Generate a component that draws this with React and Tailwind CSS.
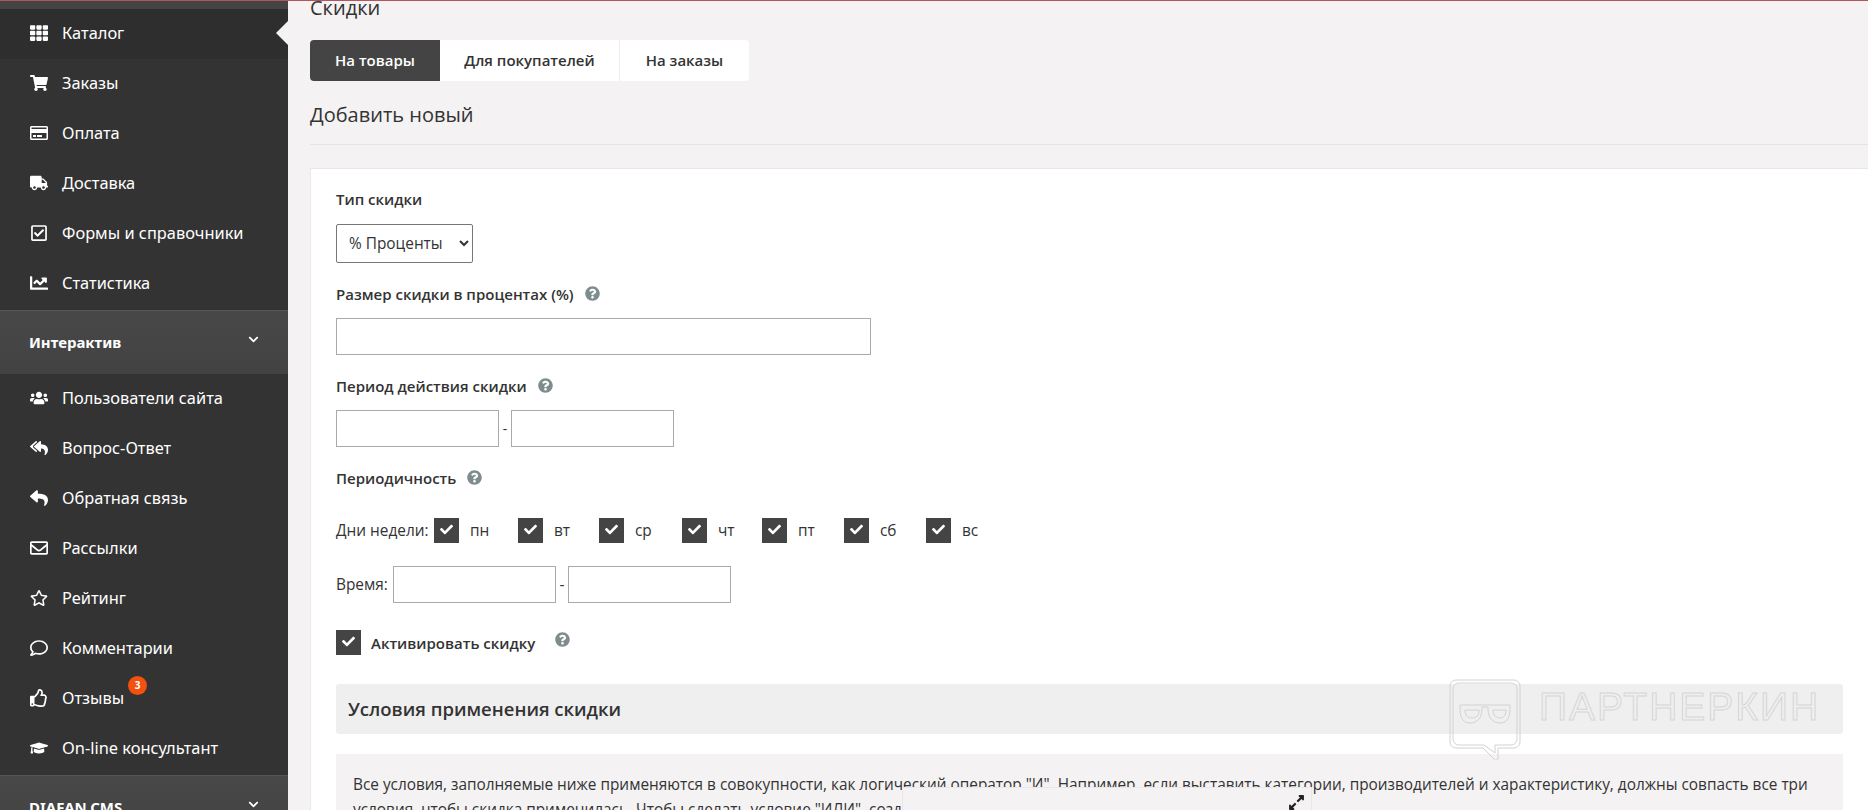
import {
  FaTh, FaShoppingCart, FaRegCreditCard, FaTruck, FaRegCheckSquare, FaChartLine,
  FaUsers, FaReplyAll, FaReply, FaRegEnvelope, FaRegStar, FaRegComment, FaRegThumbsUp,
  FaGraduationCap, FaQuestionCircle, FaCheck, FaExpandAlt, FaChevronDown,
} from "react-icons/fa";

const shopItems = [
  { label: "Каталог", icon: FaTh, active: true },
  { label: "Заказы", icon: FaShoppingCart },
  { label: "Оплата", icon: FaRegCreditCard },
  { label: "Доставка", icon: FaTruck },
  { label: "Формы и справочники", icon: FaRegCheckSquare },
  { label: "Статистика", icon: FaChartLine },
];

const interactiveItems = [
  { label: "Пользователи сайта", icon: FaUsers },
  { label: "Вопрос-Ответ", icon: FaReplyAll },
  { label: "Обратная связь", icon: FaReply },
  { label: "Рассылки", icon: FaRegEnvelope },
  { label: "Рейтинг", icon: FaRegStar },
  { label: "Комментарии", icon: FaRegComment },
  { label: "Отзывы", icon: FaRegThumbsUp, badge: 3 },
  { label: "On-line консультант", icon: FaGraduationCap },
];

const days = [
  { label: "пн", width: "w-[84px]" },
  { label: "вт", width: "w-[81px]" },
  { label: "ср", width: "w-[83px]" },
  { label: "чт", width: "w-[80px]" },
  { label: "пт", width: "w-[82px]" },
  { label: "сб", width: "w-[82px]" },
  { label: "вс", width: "w-[60px]" },
];

function MenuItem({ item }) {
  const Icon = item.icon;
  return (
    <div className={`relative flex h-[50px] items-center pb-[2px] pl-[30px] text-[16.4px] text-white ${item.active ? "bg-[#2e2e2e]" : ""}`}>
      <span className="flex w-[32px] shrink-0 items-center">
        <Icon className="text-[18px]" />
      </span>
      <span>{item.label}</span>
      {item.badge && (
        <span className="absolute left-[128px] top-[2px] flex h-[19px] w-[19px] items-center justify-center rounded-full bg-[#f4500f] text-[10px] font-bold">
          {item.badge}
        </span>
      )}
      {item.active && (
        <span className="absolute right-0 top-[12px] h-0 w-0 border-y-[12px] border-r-[12px] border-y-transparent border-r-[#f4f2f3]" />
      )}
    </div>
  );
}

function MenuHeader({ title, className }) {
  return (
    <div className={`flex h-[64px] items-center justify-between border-t border-[#555] bg-gradient-to-b from-[#484848] to-[#424242] pl-[29px] pr-[29px] text-[15px] font-bold text-white ${className}`}>
      <span>{title}</span>
      <FaChevronDown className="mb-[6px] text-[11px]" />
    </div>
  );
}

function Help({ className = "" }) {
  return <FaQuestionCircle className={`text-[15px] text-[#7f8c8d] ${className}`} />;
}

function Check({ className = "" }) {
  return (
    <span className={`flex h-[25px] w-[25px] shrink-0 items-center justify-center bg-[#444] text-white ${className}`}>
      <FaCheck className="mb-[3px] text-[13px]" />
    </span>
  );
}

function Label({ children, hint }) {
  return (
    <div className="flex h-5 items-center text-[15px] font-semibold leading-5 text-[#333]">
      {children}
      {hint && <Help className="ml-[11px] mb-[1px]" />}
    </div>
  );
}

function TextInput({ className }) {
  return <input type="text" className={`h-[37px] border border-[#aaa] bg-white ${className}`} />;
}

export default function App() {
  return (
    <div className="flex h-[810px] overflow-hidden bg-[#f4f2f3] font-['Open_Sans',sans-serif] text-[#333]">
      {/* sidebar */}
      <aside className="w-[288px] shrink-0 bg-[#333] font-['Noto_Sans',sans-serif]">
        <div className="h-[9px] bg-[#444]" />
        {shopItems.map((item) => <MenuItem key={item.label} item={item} />)}
        <div className="h-[1px]" />
        <MenuHeader title="Интерактив" />
        {interactiveItems.map((item) => <MenuItem key={item.label} item={item} />)}
        <MenuHeader title="DIAFAN.CMS" className="mt-[1px]" />
      </aside>

      {/* content */}
      <main className="relative min-w-0 flex-1 pl-[22px]">
        <h1 className="-mt-[6px] h-[46px] text-[20px] leading-[28px]">Скидки</h1>

        <div className="flex h-[41px] w-[439px] overflow-hidden rounded-[4px] bg-white text-[15px] font-semibold">
          <div className="flex w-[130px] items-center justify-center bg-[#444] text-white">На товары</div>
          <div className="flex w-[180px] items-center justify-center border-r border-[#eee]">Для покупателей</div>
          <div className="flex flex-1 items-center justify-center">На заказы</div>
        </div>

        <h2 className="mt-[19px] h-[45px] border-b border-[#e6e4e5] text-[20px] leading-[30px]">Добавить новый</h2>

        <section className="mt-[23px] h-[700px] border-t border-l border-[#e9e7e8] bg-white pl-[25px] pr-[25px] pt-[20px]">
          <Label>Тип скидки</Label>
          <select defaultValue="percent" className="mt-[15px] block h-[39px] w-[137px] rounded-[2px] border border-[#777] bg-white pl-[8px] text-[15.4px]">
            <option value="percent">% Проценты</option>
          </select>

          <div className="mt-[21px]"><Label hint>Размер скидки в процентах (%)</Label></div>
          <TextInput className="mt-[14px] block w-[535px]" />

          <div className="mt-[21px]"><Label hint>Период действия скидки</Label></div>
          <div className="mt-[14px] flex items-center text-[14px]">
            <TextInput className="w-[163px]" />
            <span className="w-[12px] text-center">-</span>
            <TextInput className="w-[163px]" />
          </div>

          <div className="mt-[21px]"><Label hint>Периодичность</Label></div>

          <div className="mt-[30px] flex h-[25px] items-center text-[15.4px]">
            <span className="w-[98px]">Дни недели:</span>
            {days.map((day) => (
              <span key={day.label} className={`flex items-center ${day.width}`}>
                <Check />
                <span className="ml-[11px]">{day.label}</span>
              </span>
            ))}
          </div>

          <div className="mt-[23px] flex items-center text-[15.4px]">
            <span className="w-[57px]">Время:</span>
            <TextInput className="w-[163px]" />
            <span className="w-[12px] text-center">-</span>
            <TextInput className="w-[163px]" />
          </div>

          <div className="mt-[27px] flex h-[25px] items-center">
            <Check />
            <span className="ml-[10px] mt-[2px] text-[15px] font-semibold">Активировать скидку</span>
            <Help className="mb-[6px] ml-[20px]" />
          </div>

          <div className="mt-[29px] flex h-[50px] items-center rounded-[3px] bg-[#efefef] pl-[12px] text-[18.5px] font-semibold">
            Условия применения скидки
          </div>

          <div className="mt-[20px] h-[120px] bg-[#f4f2f3] pl-[17px] pr-[18px] pt-[18px] text-[15.36px] leading-[25px]">
            Все условия, заполняемые ниже применяются в совокупности, как логический оператор "И". Например, если выставить категории, производителей и характеристику, должны совпасть все три условия, чтобы скидка применилась. Чтобы сделать условие "ИЛИ", создайте несколько скидок.
          </div>
        </section>

        {/* floating player box over the note */}
        <div className="absolute left-[614px] top-[787px] h-[40px] w-[410px] border border-[#e9e7e8] bg-[#f4f2f3]">
          <FaExpandAlt className="absolute right-[6px] top-[6px] text-[17px] text-[#222]" />
        </div>

        {/* watermark */}
        <div className="pointer-events-none absolute left-[1160px] top-[678px] flex items-start">
          <svg width="76" height="82" viewBox="0 0 76 82" fill="none" stroke="#d2d2d2" strokeWidth="1">
            <path d="M8 2h58a6 6 0 0 1 6 6v56a6 6 0 0 1-6 6H50v10a2 2 0 0 1-3.5 1.5L35 70H8a6 6 0 0 1-6-6V8a6 6 0 0 1 6-6z" />
            <path d="M11 5h52a6 6 0 0 1 6 6v50a6 6 0 0 1-6 6H47v8L36 67H11a6 6 0 0 1-6-6V11a6 6 0 0 1 6-6z" />
            <path d="M12 27h50v4c0 10-4 14-10 14s-12-4-12-14v-2h-6v2c0 10-6 14-12 14s-10-4-10-14z" />
            <path d="M17 32h14c0 6-3 8-7 8s-7-2-7-8zM45 32h13c0 6-3 8-6 8s-7-2-7-8z" />
          </svg>
          <span className="ml-[15px] mt-[7px] font-['Liberation_Sans',sans-serif] text-[39px] leading-[44px] tracking-[2px] text-transparent [-webkit-text-stroke:1px_#d6d6d6]">
            ПАРТНЕРКИН
          </span>
        </div>
      </main>

      {/* red line on top of the page */}
      <div className="absolute left-0 right-0 top-0 h-[1px] bg-[#b5545a]" />
    </div>
  );
}
